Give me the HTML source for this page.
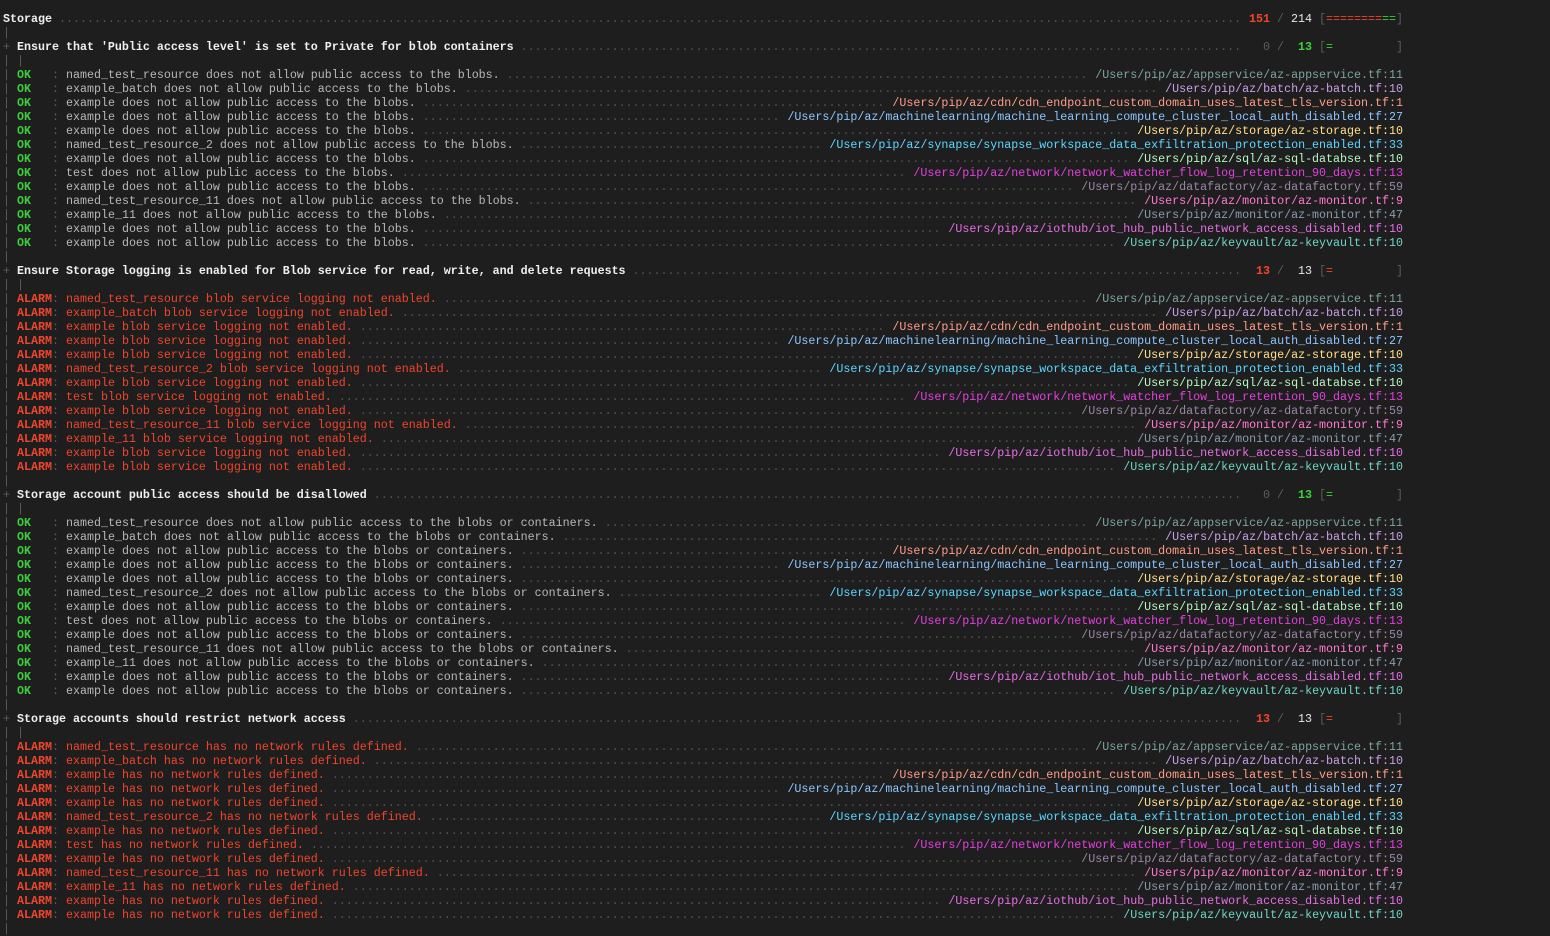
<!DOCTYPE html>
<html><head><meta charset="utf-8"><style>
html,body{margin:0;padding:0;background:#1e1e1e;width:1550px;height:928px;overflow:hidden}
#t{position:absolute;left:3px;top:12px;width:1400px;font-family:"Liberation Mono",monospace;font-size:11.67px;line-height:14px;color:#b8b8b8}
.l{display:flex;height:14px;white-space:pre;overflow:hidden}
.d{flex:1;overflow:hidden;color:#555;white-space:nowrap;padding-left:7px;margin-right:7px}
.d::before{content:"................................................................................................................................................................................................................................"}
.g{color:#5c5c5c}.b{font-weight:bold;color:#f0f0f0}
.ok{color:#3ccf3c;font-weight:bold}.al{color:#f0452c;font-weight:bold}.ar{color:#f0452c}
.w{color:#e8e8e8}.r{color:#f0452c;font-weight:bold}.gr{color:#3ccf3c;font-weight:bold}.gn{color:#3ccf3c}
.p1{color:#7fa39f}.p2{color:#c9a0e8}.p3{color:#ff9f88}.p4{color:#8cc6ff}.p5{color:#ffe08c}.p6{color:#5fd7ff}.p7{color:#b8f5c4}.p8{color:#e440e0}.p9{color:#9a88a5}.p10{color:#ff7ad0}.p11{color:#8a9bb0}.p12{color:#e66ee8}.p13{color:#6fd6c8}
</style></head><body><div id="t">
<div class="l"><span class="b">Storage</span><span class="d"></span><span><span class="r">151</span><span class="g"> / </span><span class="w">214</span><span class="g"> [</span><span class="ar">========</span><span class="gn">==</span><span class="g">]</span></span></div>
<div class="l"><span class="g">|</span></div>

<div class="l"><span><span class="g">+ </span><span class="b">Ensure that 'Public access level' is set to Private for blob containers</span></span><span class="d"></span><span><span class="g">  0 /  </span><span class="gr">13</span><span class="g"> [</span><span class="gn">=</span><span class="g">         ]</span></span></div>
<div class="l"><span class="g">| |</span></div>
<div class="l"><span><span class="g">| </span><span class="ok">OK</span><span class="g">   : </span>named_test_resource does not allow public access to the blobs.</span><span class="d"></span><span class="p1">/Users/pip/az/appservice/az-appservice.tf:11</span></div>
<div class="l"><span><span class="g">| </span><span class="ok">OK</span><span class="g">   : </span>example_batch does not allow public access to the blobs.</span><span class="d"></span><span class="p2">/Users/pip/az/batch/az-batch.tf:10</span></div>
<div class="l"><span><span class="g">| </span><span class="ok">OK</span><span class="g">   : </span>example does not allow public access to the blobs.</span><span class="d"></span><span class="p3">/Users/pip/az/cdn/cdn_endpoint_custom_domain_uses_latest_tls_version.tf:1</span></div>
<div class="l"><span><span class="g">| </span><span class="ok">OK</span><span class="g">   : </span>example does not allow public access to the blobs.</span><span class="d"></span><span class="p4">/Users/pip/az/machinelearning/machine_learning_compute_cluster_local_auth_disabled.tf:27</span></div>
<div class="l"><span><span class="g">| </span><span class="ok">OK</span><span class="g">   : </span>example does not allow public access to the blobs.</span><span class="d"></span><span class="p5">/Users/pip/az/storage/az-storage.tf:10</span></div>
<div class="l"><span><span class="g">| </span><span class="ok">OK</span><span class="g">   : </span>named_test_resource_2 does not allow public access to the blobs.</span><span class="d"></span><span class="p6">/Users/pip/az/synapse/synapse_workspace_data_exfiltration_protection_enabled.tf:33</span></div>
<div class="l"><span><span class="g">| </span><span class="ok">OK</span><span class="g">   : </span>example does not allow public access to the blobs.</span><span class="d"></span><span class="p7">/Users/pip/az/sql/az-sql-databse.tf:10</span></div>
<div class="l"><span><span class="g">| </span><span class="ok">OK</span><span class="g">   : </span>test does not allow public access to the blobs.</span><span class="d"></span><span class="p8">/Users/pip/az/network/network_watcher_flow_log_retention_90_days.tf:13</span></div>
<div class="l"><span><span class="g">| </span><span class="ok">OK</span><span class="g">   : </span>example does not allow public access to the blobs.</span><span class="d"></span><span class="p9">/Users/pip/az/datafactory/az-datafactory.tf:59</span></div>
<div class="l"><span><span class="g">| </span><span class="ok">OK</span><span class="g">   : </span>named_test_resource_11 does not allow public access to the blobs.</span><span class="d"></span><span class="p10">/Users/pip/az/monitor/az-monitor.tf:9</span></div>
<div class="l"><span><span class="g">| </span><span class="ok">OK</span><span class="g">   : </span>example_11 does not allow public access to the blobs.</span><span class="d"></span><span class="p11">/Users/pip/az/monitor/az-monitor.tf:47</span></div>
<div class="l"><span><span class="g">| </span><span class="ok">OK</span><span class="g">   : </span>example does not allow public access to the blobs.</span><span class="d"></span><span class="p12">/Users/pip/az/iothub/iot_hub_public_network_access_disabled.tf:10</span></div>
<div class="l"><span><span class="g">| </span><span class="ok">OK</span><span class="g">   : </span>example does not allow public access to the blobs.</span><span class="d"></span><span class="p13">/Users/pip/az/keyvault/az-keyvault.tf:10</span></div>
<div class="l"><span class="g">|</span></div>

<div class="l"><span><span class="g">+ </span><span class="b">Ensure Storage logging is enabled for Blob service for read, write, and delete requests</span></span><span class="d"></span><span><span class="r"> 13</span><span class="g"> /  </span><span class="w">13</span><span class="g"> [</span><span class="ar">=</span><span class="g">         ]</span></span></div>
<div class="l"><span class="g">| |</span></div>
<div class="l"><span><span class="g">| </span><span class="al">ALARM</span><span class="g">: </span><span class="ar">named_test_resource blob service logging not enabled.</span></span><span class="d"></span><span class="p1">/Users/pip/az/appservice/az-appservice.tf:11</span></div>
<div class="l"><span><span class="g">| </span><span class="al">ALARM</span><span class="g">: </span><span class="ar">example_batch blob service logging not enabled.</span></span><span class="d"></span><span class="p2">/Users/pip/az/batch/az-batch.tf:10</span></div>
<div class="l"><span><span class="g">| </span><span class="al">ALARM</span><span class="g">: </span><span class="ar">example blob service logging not enabled.</span></span><span class="d"></span><span class="p3">/Users/pip/az/cdn/cdn_endpoint_custom_domain_uses_latest_tls_version.tf:1</span></div>
<div class="l"><span><span class="g">| </span><span class="al">ALARM</span><span class="g">: </span><span class="ar">example blob service logging not enabled.</span></span><span class="d"></span><span class="p4">/Users/pip/az/machinelearning/machine_learning_compute_cluster_local_auth_disabled.tf:27</span></div>
<div class="l"><span><span class="g">| </span><span class="al">ALARM</span><span class="g">: </span><span class="ar">example blob service logging not enabled.</span></span><span class="d"></span><span class="p5">/Users/pip/az/storage/az-storage.tf:10</span></div>
<div class="l"><span><span class="g">| </span><span class="al">ALARM</span><span class="g">: </span><span class="ar">named_test_resource_2 blob service logging not enabled.</span></span><span class="d"></span><span class="p6">/Users/pip/az/synapse/synapse_workspace_data_exfiltration_protection_enabled.tf:33</span></div>
<div class="l"><span><span class="g">| </span><span class="al">ALARM</span><span class="g">: </span><span class="ar">example blob service logging not enabled.</span></span><span class="d"></span><span class="p7">/Users/pip/az/sql/az-sql-databse.tf:10</span></div>
<div class="l"><span><span class="g">| </span><span class="al">ALARM</span><span class="g">: </span><span class="ar">test blob service logging not enabled.</span></span><span class="d"></span><span class="p8">/Users/pip/az/network/network_watcher_flow_log_retention_90_days.tf:13</span></div>
<div class="l"><span><span class="g">| </span><span class="al">ALARM</span><span class="g">: </span><span class="ar">example blob service logging not enabled.</span></span><span class="d"></span><span class="p9">/Users/pip/az/datafactory/az-datafactory.tf:59</span></div>
<div class="l"><span><span class="g">| </span><span class="al">ALARM</span><span class="g">: </span><span class="ar">named_test_resource_11 blob service logging not enabled.</span></span><span class="d"></span><span class="p10">/Users/pip/az/monitor/az-monitor.tf:9</span></div>
<div class="l"><span><span class="g">| </span><span class="al">ALARM</span><span class="g">: </span><span class="ar">example_11 blob service logging not enabled.</span></span><span class="d"></span><span class="p11">/Users/pip/az/monitor/az-monitor.tf:47</span></div>
<div class="l"><span><span class="g">| </span><span class="al">ALARM</span><span class="g">: </span><span class="ar">example blob service logging not enabled.</span></span><span class="d"></span><span class="p12">/Users/pip/az/iothub/iot_hub_public_network_access_disabled.tf:10</span></div>
<div class="l"><span><span class="g">| </span><span class="al">ALARM</span><span class="g">: </span><span class="ar">example blob service logging not enabled.</span></span><span class="d"></span><span class="p13">/Users/pip/az/keyvault/az-keyvault.tf:10</span></div>
<div class="l"><span class="g">|</span></div>

<div class="l"><span><span class="g">+ </span><span class="b">Storage account public access should be disallowed</span></span><span class="d"></span><span><span class="g">  0 /  </span><span class="gr">13</span><span class="g"> [</span><span class="gn">=</span><span class="g">         ]</span></span></div>
<div class="l"><span class="g">| |</span></div>
<div class="l"><span><span class="g">| </span><span class="ok">OK</span><span class="g">   : </span>named_test_resource does not allow public access to the blobs or containers.</span><span class="d"></span><span class="p1">/Users/pip/az/appservice/az-appservice.tf:11</span></div>
<div class="l"><span><span class="g">| </span><span class="ok">OK</span><span class="g">   : </span>example_batch does not allow public access to the blobs or containers.</span><span class="d"></span><span class="p2">/Users/pip/az/batch/az-batch.tf:10</span></div>
<div class="l"><span><span class="g">| </span><span class="ok">OK</span><span class="g">   : </span>example does not allow public access to the blobs or containers.</span><span class="d"></span><span class="p3">/Users/pip/az/cdn/cdn_endpoint_custom_domain_uses_latest_tls_version.tf:1</span></div>
<div class="l"><span><span class="g">| </span><span class="ok">OK</span><span class="g">   : </span>example does not allow public access to the blobs or containers.</span><span class="d"></span><span class="p4">/Users/pip/az/machinelearning/machine_learning_compute_cluster_local_auth_disabled.tf:27</span></div>
<div class="l"><span><span class="g">| </span><span class="ok">OK</span><span class="g">   : </span>example does not allow public access to the blobs or containers.</span><span class="d"></span><span class="p5">/Users/pip/az/storage/az-storage.tf:10</span></div>
<div class="l"><span><span class="g">| </span><span class="ok">OK</span><span class="g">   : </span>named_test_resource_2 does not allow public access to the blobs or containers.</span><span class="d"></span><span class="p6">/Users/pip/az/synapse/synapse_workspace_data_exfiltration_protection_enabled.tf:33</span></div>
<div class="l"><span><span class="g">| </span><span class="ok">OK</span><span class="g">   : </span>example does not allow public access to the blobs or containers.</span><span class="d"></span><span class="p7">/Users/pip/az/sql/az-sql-databse.tf:10</span></div>
<div class="l"><span><span class="g">| </span><span class="ok">OK</span><span class="g">   : </span>test does not allow public access to the blobs or containers.</span><span class="d"></span><span class="p8">/Users/pip/az/network/network_watcher_flow_log_retention_90_days.tf:13</span></div>
<div class="l"><span><span class="g">| </span><span class="ok">OK</span><span class="g">   : </span>example does not allow public access to the blobs or containers.</span><span class="d"></span><span class="p9">/Users/pip/az/datafactory/az-datafactory.tf:59</span></div>
<div class="l"><span><span class="g">| </span><span class="ok">OK</span><span class="g">   : </span>named_test_resource_11 does not allow public access to the blobs or containers.</span><span class="d"></span><span class="p10">/Users/pip/az/monitor/az-monitor.tf:9</span></div>
<div class="l"><span><span class="g">| </span><span class="ok">OK</span><span class="g">   : </span>example_11 does not allow public access to the blobs or containers.</span><span class="d"></span><span class="p11">/Users/pip/az/monitor/az-monitor.tf:47</span></div>
<div class="l"><span><span class="g">| </span><span class="ok">OK</span><span class="g">   : </span>example does not allow public access to the blobs or containers.</span><span class="d"></span><span class="p12">/Users/pip/az/iothub/iot_hub_public_network_access_disabled.tf:10</span></div>
<div class="l"><span><span class="g">| </span><span class="ok">OK</span><span class="g">   : </span>example does not allow public access to the blobs or containers.</span><span class="d"></span><span class="p13">/Users/pip/az/keyvault/az-keyvault.tf:10</span></div>
<div class="l"><span class="g">|</span></div>

<div class="l"><span><span class="g">+ </span><span class="b">Storage accounts should restrict network access</span></span><span class="d"></span><span><span class="r"> 13</span><span class="g"> /  </span><span class="w">13</span><span class="g"> [</span><span class="ar">=</span><span class="g">         ]</span></span></div>
<div class="l"><span class="g">| |</span></div>
<div class="l"><span><span class="g">| </span><span class="al">ALARM</span><span class="g">: </span><span class="ar">named_test_resource has no network rules defined.</span></span><span class="d"></span><span class="p1">/Users/pip/az/appservice/az-appservice.tf:11</span></div>
<div class="l"><span><span class="g">| </span><span class="al">ALARM</span><span class="g">: </span><span class="ar">example_batch has no network rules defined.</span></span><span class="d"></span><span class="p2">/Users/pip/az/batch/az-batch.tf:10</span></div>
<div class="l"><span><span class="g">| </span><span class="al">ALARM</span><span class="g">: </span><span class="ar">example has no network rules defined.</span></span><span class="d"></span><span class="p3">/Users/pip/az/cdn/cdn_endpoint_custom_domain_uses_latest_tls_version.tf:1</span></div>
<div class="l"><span><span class="g">| </span><span class="al">ALARM</span><span class="g">: </span><span class="ar">example has no network rules defined.</span></span><span class="d"></span><span class="p4">/Users/pip/az/machinelearning/machine_learning_compute_cluster_local_auth_disabled.tf:27</span></div>
<div class="l"><span><span class="g">| </span><span class="al">ALARM</span><span class="g">: </span><span class="ar">example has no network rules defined.</span></span><span class="d"></span><span class="p5">/Users/pip/az/storage/az-storage.tf:10</span></div>
<div class="l"><span><span class="g">| </span><span class="al">ALARM</span><span class="g">: </span><span class="ar">named_test_resource_2 has no network rules defined.</span></span><span class="d"></span><span class="p6">/Users/pip/az/synapse/synapse_workspace_data_exfiltration_protection_enabled.tf:33</span></div>
<div class="l"><span><span class="g">| </span><span class="al">ALARM</span><span class="g">: </span><span class="ar">example has no network rules defined.</span></span><span class="d"></span><span class="p7">/Users/pip/az/sql/az-sql-databse.tf:10</span></div>
<div class="l"><span><span class="g">| </span><span class="al">ALARM</span><span class="g">: </span><span class="ar">test has no network rules defined.</span></span><span class="d"></span><span class="p8">/Users/pip/az/network/network_watcher_flow_log_retention_90_days.tf:13</span></div>
<div class="l"><span><span class="g">| </span><span class="al">ALARM</span><span class="g">: </span><span class="ar">example has no network rules defined.</span></span><span class="d"></span><span class="p9">/Users/pip/az/datafactory/az-datafactory.tf:59</span></div>
<div class="l"><span><span class="g">| </span><span class="al">ALARM</span><span class="g">: </span><span class="ar">named_test_resource_11 has no network rules defined.</span></span><span class="d"></span><span class="p10">/Users/pip/az/monitor/az-monitor.tf:9</span></div>
<div class="l"><span><span class="g">| </span><span class="al">ALARM</span><span class="g">: </span><span class="ar">example_11 has no network rules defined.</span></span><span class="d"></span><span class="p11">/Users/pip/az/monitor/az-monitor.tf:47</span></div>
<div class="l"><span><span class="g">| </span><span class="al">ALARM</span><span class="g">: </span><span class="ar">example has no network rules defined.</span></span><span class="d"></span><span class="p12">/Users/pip/az/iothub/iot_hub_public_network_access_disabled.tf:10</span></div>
<div class="l"><span><span class="g">| </span><span class="al">ALARM</span><span class="g">: </span><span class="ar">example has no network rules defined.</span></span><span class="d"></span><span class="p13">/Users/pip/az/keyvault/az-keyvault.tf:10</span></div>
<div class="l"><span class="g">|</span></div>
</div></body></html>
